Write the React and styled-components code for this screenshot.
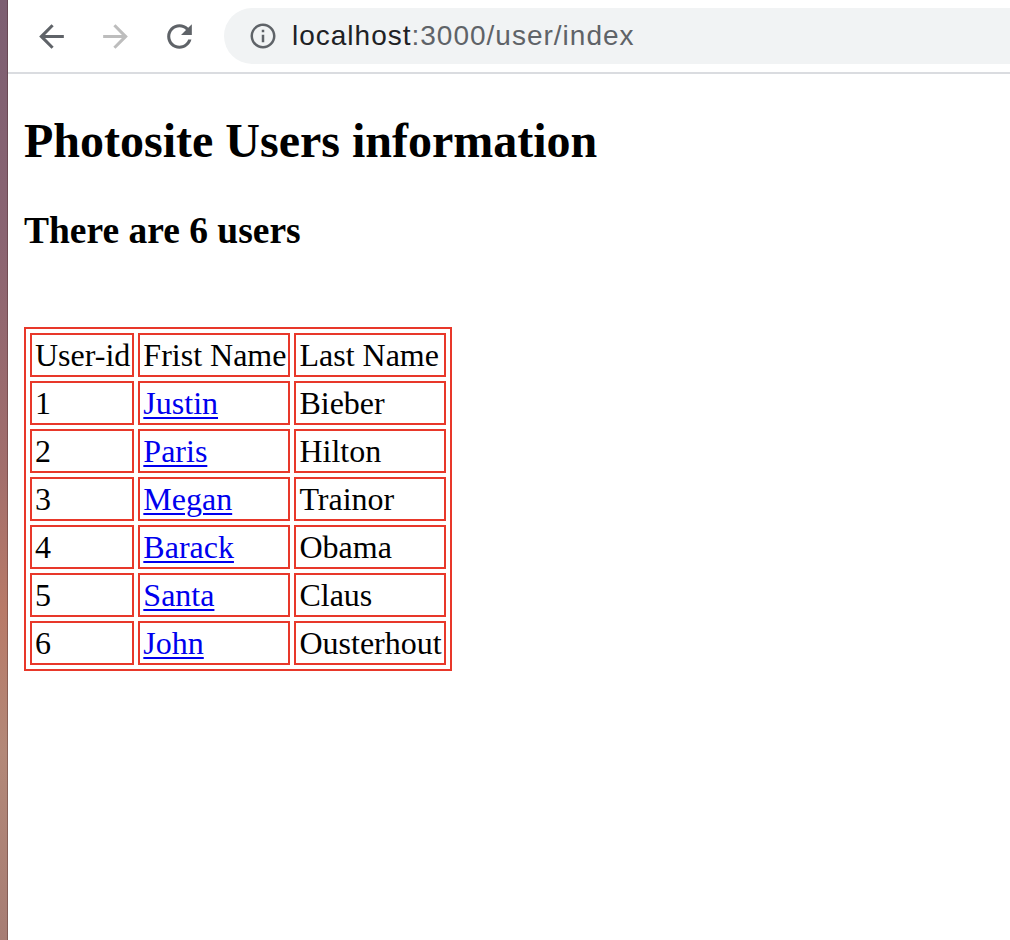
import React from 'react';
import styled, { createGlobalStyle } from 'styled-components';

const GlobalStyle = createGlobalStyle`
  html, body {
    margin: 0;
    padding: 0;
    background: #ffffff;
  }
  body {
    font-family: "Liberation Serif", "Times New Roman", serif;
    color: #000000;
  }
`;

const Screen = styled.div`
  display: flex;
  width: 1010px;
  height: 940px;
  overflow: hidden;
`;

const DesktopStrip = styled.div`
  width: 8px;
  flex-shrink: 0;
  background: linear-gradient(
    180deg,
    #7c5f72 0%,
    #8a6472 25%,
    #a26e6c 50%,
    #b87a68 65%,
    #b38878 80%,
    #a77d74 100%
  );
  box-shadow: inset -1px 0 0 rgba(60, 30, 30, 0.35);
`;

const BrowserWindow = styled.div`
  flex: 1;
  display: flex;
  flex-direction: column;
  background: #ffffff;
  min-width: 0;
`;

const Toolbar = styled.div`
  height: 72px;
  flex-shrink: 0;
  display: flex;
  align-items: center;
  gap: 27px;
  padding-left: 25px;
  border-bottom: 2px solid #dadce0;
`;

const NavIcon = styled.svg`
  width: 37px;
  height: 37px;
  flex-shrink: 0;
  fill: ${props => (props.$disabled ? '#bdbdbd' : '#5f6368')};
`;

const AddressBar = styled.div`
  flex: 1;
  height: 56px;
  margin-left: -1px;
  margin-right: -40px;
  border-radius: 28px;
  background: #f1f3f4;
  display: flex;
  align-items: center;
  padding-left: 24px;
  gap: 14px;
`;

const InfoIcon = styled.svg`
  width: 30px;
  height: 30px;
  fill: #5f6368;
  flex-shrink: 0;
`;

const Url = styled.span`
  font-family: "Liberation Sans", Arial, sans-serif;
  font-size: 28px;
  letter-spacing: 1px;
  color: #5f6368;
  white-space: nowrap;
`;

const Host = styled.span`
  color: #202124;
`;

const Page = styled.main`
  padding: 0 16px;
`;

const Title = styled.h1`
  margin: 39px 0 0;
  font-size: 48px;
  line-height: 56px;
  font-weight: bold;
`;

const Subtitle = styled.h2`
  margin: 40px 0 0;
  font-size: 37.5px;
  line-height: 44px;
  font-weight: bold;
`;

const UserTable = styled.table`
  margin-top: 74px;
  border: 2px solid #e8382a;
  border-spacing: 4px;
  font-size: 32px;
  line-height: 36px;
`;

const Cell = styled.td`
  border: 2px solid #e8382a;
  padding: 2px 2px 2px 3px;
  text-align: left;
  white-space: nowrap;
`;

const HeadCell = styled(Cell).attrs({ as: 'th' })`
  font-weight: normal;
`;

const NameLink = styled.a`
  color: #0000ee;
  text-decoration: underline;
  text-decoration-thickness: 2px;
  text-underline-offset: 3px;
`;

const users = [
  { id: 1, first: 'Justin', last: 'Bieber' },
  { id: 2, first: 'Paris', last: 'Hilton' },
  { id: 3, first: 'Megan', last: 'Trainor' },
  { id: 4, first: 'Barack', last: 'Obama' },
  { id: 5, first: 'Santa', last: 'Claus' },
  { id: 6, first: 'John', last: 'Ousterhout' },
];

export default function App() {
  return (
    <Screen>
      <GlobalStyle />
      <DesktopStrip />
      <BrowserWindow>
        <Toolbar>
          <NavIcon viewBox="0 0 24 24">
            <path d="M20 11H7.83l5.59-5.59L12 4l-8 8 8 8 1.41-1.41L7.83 13H20v-2z" />
          </NavIcon>
          <NavIcon viewBox="0 0 24 24" $disabled>
            <path d="M12 4l-1.41 1.41L16.17 11H4v2h12.17l-5.58 5.59L12 20l8-8z" />
          </NavIcon>
          <NavIcon viewBox="0 0 24 24">
            <path d="M17.65 6.35C16.2 4.9 14.21 4 12 4c-4.42 0-7.99 3.58-7.99 8s3.57 8 7.99 8c3.73 0 6.84-2.55 7.73-6h-2.08c-.82 2.33-3.04 4-5.65 4-3.31 0-6-2.69-6-6s2.69-6 6-6c1.66 0 3.14.69 4.22 1.78L13 11h7V4l-2.35 2.35z" />
          </NavIcon>
          <AddressBar>
            <InfoIcon viewBox="0 0 24 24">
              <path d="M11 7h2v2h-2zm0 4h2v6h-2zm1-9C6.48 2 2 6.48 2 12s4.48 10 10 10 10-4.48 10-10S17.52 2 12 2zm0 18c-4.41 0-8-3.59-8-8s3.59-8 8-8 8 3.59 8 8-3.59 8-8 8z" />
            </InfoIcon>
            <Url>
              <Host>localhost</Host>:3000/user/index
            </Url>
          </AddressBar>
        </Toolbar>
        <Page>
          <Title>Photosite Users information</Title>
          <Subtitle>There are 6 users</Subtitle>
          <UserTable>
            <tbody>
              <tr>
                <HeadCell>User-id</HeadCell>
                <HeadCell>Frist Name</HeadCell>
                <HeadCell>Last Name</HeadCell>
              </tr>
              {users.map(u => (
                <tr key={u.id}>
                  <Cell>{u.id}</Cell>
                  <Cell>
                    <NameLink href={`#/user/${u.id}`}>{u.first}</NameLink>
                  </Cell>
                  <Cell>{u.last}</Cell>
                </tr>
              ))}
            </tbody>
          </UserTable>
        </Page>
      </BrowserWindow>
    </Screen>
  );
}
